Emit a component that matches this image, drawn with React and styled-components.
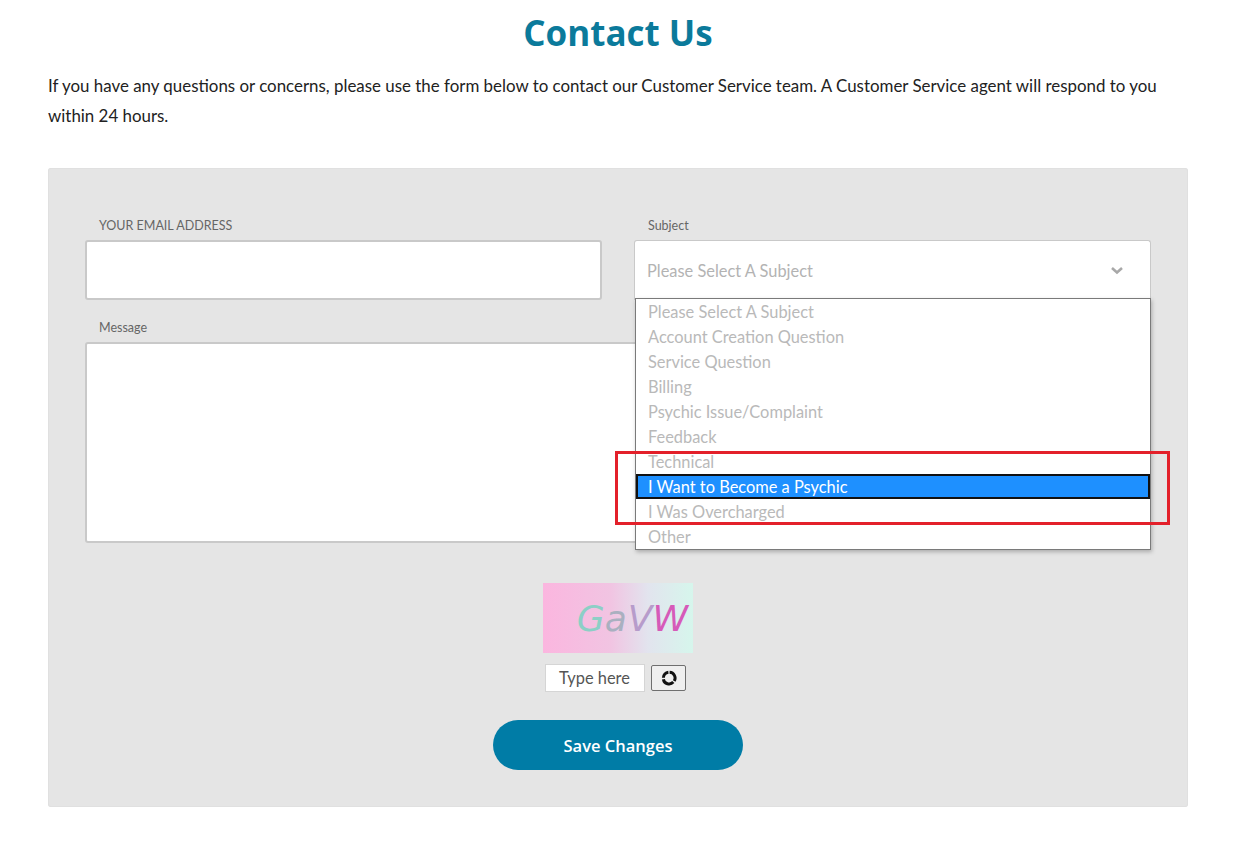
import React from "react";
import styled, { createGlobalStyle } from "styled-components";

const GlobalStyle = createGlobalStyle`
  * { box-sizing: border-box; }
  body {
    margin: 0;
    background: #ffffff;
    font-family: "Lato", "Liberation Sans", sans-serif;
    color: #222222;
  }
`

const Page = styled.div`
  width: 1242px;
  padding: 0 54px 0 48px;
`

const Title = styled.h1`
  margin: 0;
  padding-top: 12px;
  height: 71px;
  color: #0b7a9b;
  font-family: "Open Sans", sans-serif;
  font-size: 35px;
  font-weight: 700;
  text-align: center;
  line-height: 42px;
`

const Intro = styled.p`
  margin: 0 0 37px 0;
  font-size: 16.9px;
  line-height: 30px;
  color: #222222;
`

const Panel = styled.form`
  padding: 51px 37px 37px 37px;
  background-color: #e5e5e5;
  border-radius: 3px;
  box-shadow: inset 0 0 0 1px #e0e0e0;
`

const Row = styled.div`
  display: grid;
  grid-template-columns: 1fr 1fr;
  column-gap: 32px;
`

const Field = styled.div`
  position: relative;
  display: flex;
  flex-direction: column;
  margin-bottom: ${props => props.$mb || "0"};
  z-index: ${props => props.$z || "auto"};
`

const Label = styled.label`
  margin-left: 14px;
  margin-bottom: 7px;
  font-size: 12.5px;
  line-height: 14px;
  color: #666666;
`

const Input = styled.div`
  height: 60px;
  background: #ffffff;
  border: 2px solid #c9c9c9;
  border-radius: 3px;
`

const Select = styled.div`
  display: flex;
  align-items: center;
  justify-content: space-between;
  padding: 0 26px 0 12px;
  height: 60px;
  background: #ffffff;
  border: 1px solid #c9c9c9;
  border-bottom: none;
  border-radius: 3px 3px 0 0;
  font-size: 16.4px;
  color: #b3b3b3;
`

const Dropdown = styled.ul`
  position: absolute;
  top: 79px;
  left: 1px;
  right: 0;
  margin: 0;
  padding: 0;
  list-style: none;
  background: #ffffff;
  border: 1px solid #7a7a7a;
  box-shadow: 1px 2px 4px rgba(0, 0, 0, 0.25);
`

const Option = styled.li`
  height: 25px;
  padding: 0 12px;
  font-size: 16.4px;
  line-height: 25px;
  color: ${props => (props.$active ? "#ffffff" : "#b9b9b9")};
  background: ${props => (props.$active ? "#1e90ff" : "transparent")};
  outline: ${props => (props.$active ? "2px solid #111111" : "none")};
  outline-offset: -2px;
`

const Highlight = styled.div`
  position: absolute;
  left: -21px;
  top: 152px;
  width: 555px;
  height: 74px;
  border: 3px solid #e3202a;
  pointer-events: none;
`

const TextArea = styled.div`
  height: 201px;
  background: #ffffff;
  border: 2px solid #c9c9c9;
  border-radius: 3px;
`

const Captcha = styled.div`
  display: flex;
  flex-direction: column;
  align-items: center;
  margin-top: 40px;
`

const CaptchaImage = styled.div`
  display: flex;
  align-items: center;
  justify-content: flex-end;
  padding-right: 5px;
  width: 150px;
  height: 70px;
  background: linear-gradient(90deg, #fbb6df 0%, #f1c4e2 45%, #e2e4ee 70%, #d6f6ec 100%);
  font-family: "DejaVu Sans", sans-serif;
  font-style: italic;
  font-size: 36px;
`

const Glyph = styled.span`
  color: ${props => props.$color};
  margin-left: ${props => props.$gap || "0"};
`

const CaptchaRow = styled.div`
  display: flex;
  align-items: center;
  gap: 6px;
  margin-top: 11px;
  margin-right: 5px;
`

const CaptchaInput = styled.div`
  width: 100px;
  height: 28px;
  padding-left: 13px;
  background: #ffffff;
  border: 1px solid #d5d5d5;
  font-size: 16.4px;
  line-height: 26px;
  color: #555555;
`

const RefreshButton = styled.button`
  display: flex;
  align-items: center;
  justify-content: center;
  width: 35px;
  height: 26px;
  padding: 0;
  background: #efefef;
  border: 1px solid #6f6f6f;
  border-radius: 2px;
`

const SubmitButton = styled.button`
  display: block;
  margin: 28px auto 0 auto;
  width: 250px;
  height: 50px;
  border: none;
  border-radius: 25px;
  background-color: #007ca6;
  color: #ffffff;
  font-family: "Open Sans", sans-serif;
  font-size: 16.5px;
  font-weight: 600;
`

const subjects = [
  "Please Select A Subject",
  "Account Creation Question",
  "Service Question",
  "Billing",
  "Psychic Issue/Complaint",
  "Feedback",
  "Technical",
  "I Want to Become a Psychic",
  "I Was Overcharged",
  "Other",
];

export default function App() {
  return (
    <Page>
      <GlobalStyle />
      <Title>Contact Us</Title>
      <Intro>
        If you have any questions or concerns, please use the form below to contact our Customer Service team. A Customer Service agent will respond to you within 24 hours.
      </Intro>
      <Panel onSubmit={e => e.preventDefault()}>
        <Row>
          <Field $mb="21px">
            <Label>YOUR EMAIL ADDRESS</Label>
            <Input />
          </Field>
          <Field $mb="21px" $z="2">
            <Label>Subject</Label>
            <Select>
              <span>Please Select A Subject</span>
              <svg width="14" height="9" viewBox="0 0 14 9">
                <path d="M2 2 L7 6.5 L12 2" fill="none" stroke="#a8a8a8" strokeWidth="2.6" />
              </svg>
            </Select>
            <Dropdown>
              {subjects.map(s => (
                <Option key={s} $active={s === "I Want to Become a Psychic"}>{s}</Option>
              ))}
              <Highlight />
            </Dropdown>
          </Field>
        </Row>
        <Field>
          <Label>Message</Label>
          <TextArea />
        </Field>
        <Captcha>
          <CaptchaImage>
            <Glyph $color="#8ccfc6">G</Glyph>
            <Glyph $color="#a9b0c0">a</Glyph>
            <Glyph $color="#b79ccb" $gap="1px">V</Glyph>
            <Glyph $color="#d65bb9">W</Glyph>
          </CaptchaImage>
          <CaptchaRow>
            <CaptchaInput>Type here</CaptchaInput>
            <RefreshButton type="button">
              <svg width="16" height="16" viewBox="0 0 16 16">
                <path d="M8.6 2.3 A5.7 5.7 0 0 1 13.2 11" fill="none" stroke="#111" strokeWidth="3" />
                <path d="M12.3 12.1 A5.7 5.7 0 0 1 2.4 9.2" fill="none" stroke="#111" strokeWidth="3" />
                <path d="M2.4 7.8 A5.7 5.7 0 0 1 7.4 2.3" fill="none" stroke="#111" strokeWidth="3" />
              </svg>
            </RefreshButton>
          </CaptchaRow>
        </Captcha>
        <SubmitButton type="submit">Save Changes</SubmitButton>
      </Panel>
    </Page>
  );
}
